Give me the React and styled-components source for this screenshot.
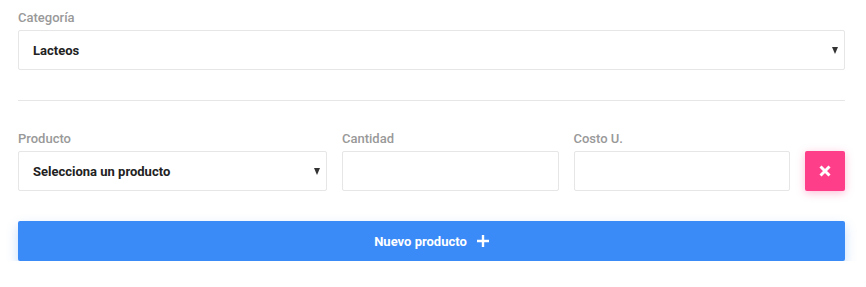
import React from 'react';
import styled, { createGlobalStyle } from 'styled-components';

const GlobalStyle = createGlobalStyle`
  body {
    margin: 0;
    background: #fff;
    font-family: Roboto, "Liberation Sans", Arial, sans-serif;
  }
  * { box-sizing: border-box; }
`;

const Page = styled.div`
  width: 866px;
  padding: 9px 21px 0 18px;
`;

const Field = styled.div`
  display: flex;
  flex-direction: column;
  flex: ${({ grow }) => grow || 'none'};
  min-width: 0;
`;

const Label = styled.label`
  font-size: 13px;
  font-weight: 500;
  color: #999;
  line-height: 18px;
  margin-bottom: 3px;
`;

const Box = styled.div`
  height: 40px;
  border: 1px solid #e6e6e6;
  border-radius: 2px;
  background: #fff;
`;

const SelectBox = styled(Box)`
  display: flex;
  align-items: center;
  justify-content: space-between;
  padding: 0 6px 0 14px;
  font-size: 13px;
  font-weight: 700;
  color: #222;
`;

const Caret = styled.span`
  width: 0;
  height: 0;
  border-left: 3.5px solid transparent;
  border-right: 3.5px solid transparent;
  border-top: 7px solid #333;
`;

const Divider = styled.hr`
  border: 0;
  border-top: 1px solid #e6e6e6;
  margin: 30px 0 29px;
`;

const Row = styled.div`
  display: flex;
  align-items: flex-end;
  gap: 15px;
`;

const DeleteButton = styled.button`
  width: 40px;
  height: 40px;
  border: 0;
  border-radius: 2px;
  background: #ff3e8a;
  box-shadow: 0 2px 8px rgba(255, 62, 138, 0.35);
  display: flex;
  align-items: center;
  justify-content: center;
  padding: 0;
`;

const AddButton = styled.button`
  margin-top: 30px;
  width: 100%;
  height: 40px;
  border: 0;
  border-radius: 2px;
  background: #3a8af7;
  box-shadow: 0 5px 12px rgba(58, 138, 247, 0.3);
  color: #fff;
  font-family: inherit;
  font-size: 13px;
  font-weight: 700;
  display: flex;
  align-items: center;
  justify-content: center;
  gap: 10px;
`;

const CrossIcon = () => (
  <svg width="12" height="12" viewBox="0 0 12 12">
    <path d="M1.5 1.5 L10.5 10.5 M10.5 1.5 L1.5 10.5" stroke="#fff" strokeWidth="3" />
  </svg>
);

const PlusIcon = () => (
  <svg width="12" height="12" viewBox="0 0 12 12">
    <path d="M6 0 V12 M0 6 H12" stroke="#fff" strokeWidth="2.4" />
  </svg>
);

const App = () => {
  return (
    <Page>
      <GlobalStyle />
      <Field>
        <Label>Categoría</Label>
        <SelectBox>
          Lacteos
          <Caret />
        </SelectBox>
      </Field>
      <Divider />
      <Row>
        <Field style={{ width: 309 }}>
          <Label>Producto</Label>
          <SelectBox>
            Selecciona un producto
            <Caret />
          </SelectBox>
        </Field>
        <Field grow="1">
          <Label>Cantidad</Label>
          <Box />
        </Field>
        <Field grow="1">
          <Label>Costo U.</Label>
          <Box />
        </Field>
        <DeleteButton>
          <CrossIcon />
        </DeleteButton>
      </Row>
      <AddButton>
        Nuevo producto
        <PlusIcon />
      </AddButton>
    </Page>
  );
};

export default App;
